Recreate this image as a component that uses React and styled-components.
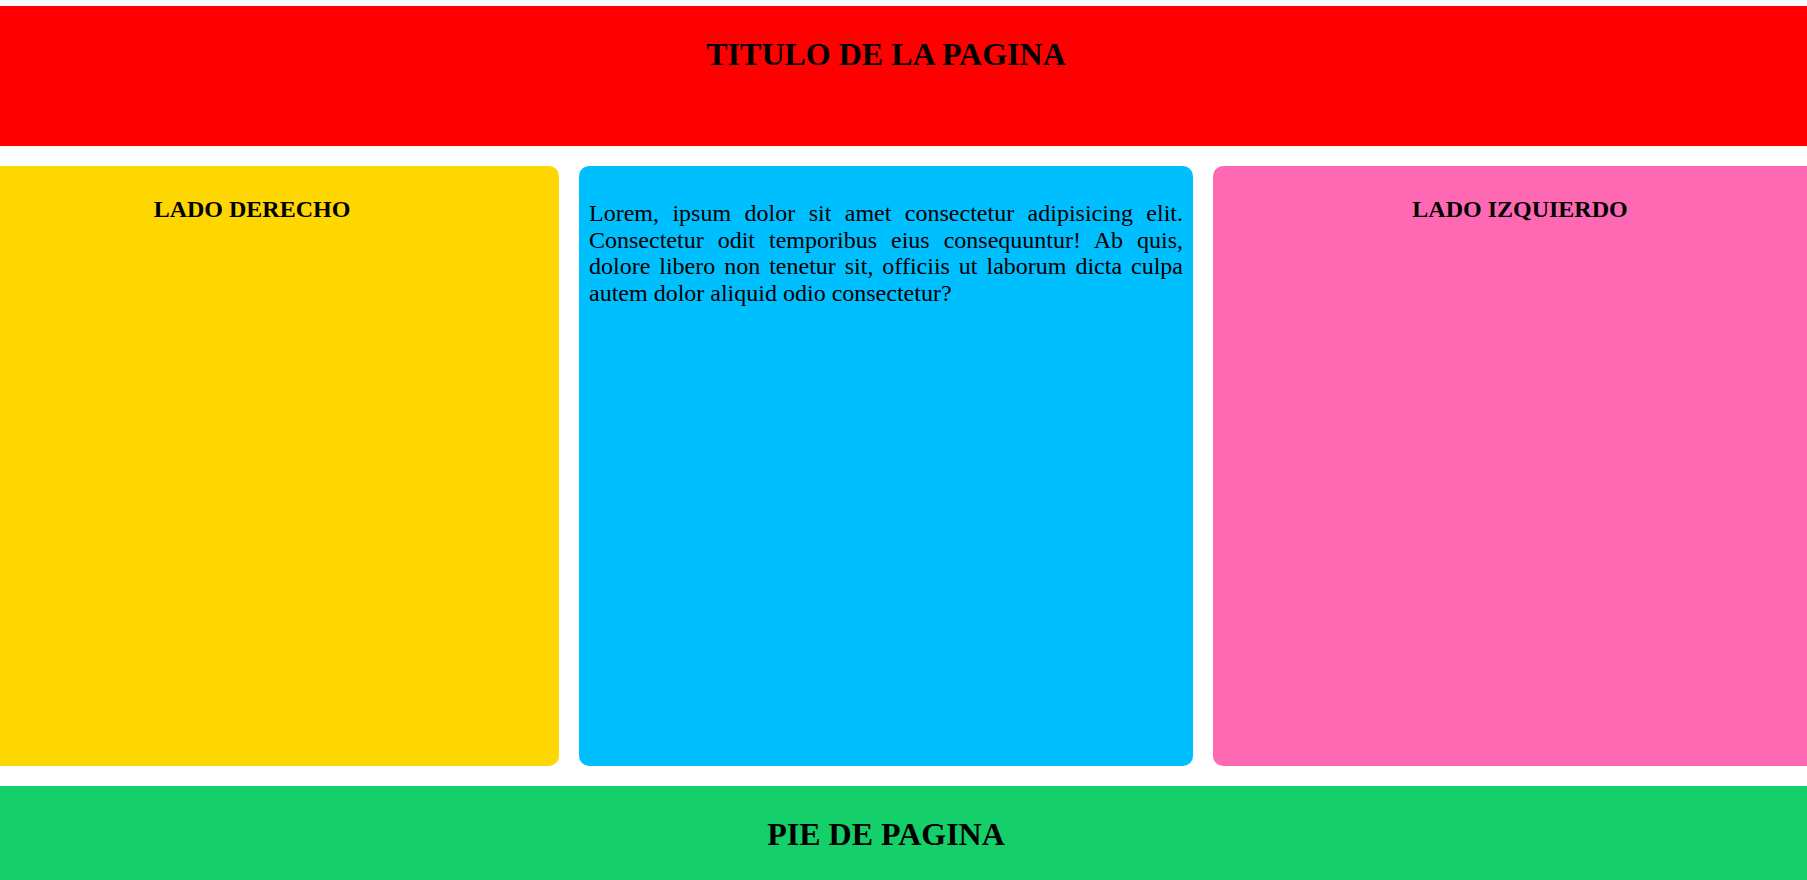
import styled, { createGlobalStyle } from 'styled-components'

const GlobalStyle = createGlobalStyle`
html, body {
  margin: 0;
  padding: 0;
  overflow: hidden;
  background: #ffffff;
}
body {
  font-family: "Liberation Serif", "Times New Roman", serif;
  line-height: 1.107;
  color: #000000;
}
`;

const Page = styled.div`
width: 1882px;
margin-left: -55px;
padding-top: 6px;
display: grid;
grid-template-columns: repeat(3, 1fr);
gap: 20px;
`;

const Banner = styled.header`
grid-column: 1 / -1;
background-color: ${props => props.color};
height: ${props => props.height || 'auto'};
padding: 10px;
box-sizing: border-box;
text-align: center;
`;

const BannerTitle = styled.h1`
font-size: 32px;
font-weight: bold;
margin: 21px 0;
`;

const Panel = styled.section`
background-color: ${props => props.color};
height: 600px;
padding: 10px;
box-sizing: border-box;
border-radius: 10px;
`;

const PanelTitle = styled.h2`
font-size: 24px;
font-weight: bold;
text-align: center;
margin: 19.92px 0;
`;

const Text = styled.p`
font-size: 24px;
text-align: justify;
margin: 24px 0;
`;

const App = () => {
    return (
        <>
            <GlobalStyle />
            <Page>
                <Banner color='#ff0000' height='140px'>
                    <BannerTitle>TITULO DE LA PAGINA</BannerTitle>
                </Banner>
                <Panel color='#ffd700'>
                    <PanelTitle>LADO DERECHO</PanelTitle>
                </Panel>
                <Panel color='#00bfff'>
                    <Text>
                        Lorem, ipsum dolor sit amet consectetur adipisicing elit. Consectetur odit
                        temporibus eius consequuntur! Ab quis, dolore libero non tenetur sit, officiis
                        ut laborum dicta culpa autem dolor aliquid odio consectetur?
                    </Text>
                </Panel>
                <Panel color='#ff69b4'>
                    <PanelTitle>LADO IZQUIERDO</PanelTitle>
                </Panel>
                <Banner color='#15d06a'>
                    <BannerTitle>PIE DE PAGINA</BannerTitle>
                </Banner>
            </Page>
        </>
    )
}

export default App
